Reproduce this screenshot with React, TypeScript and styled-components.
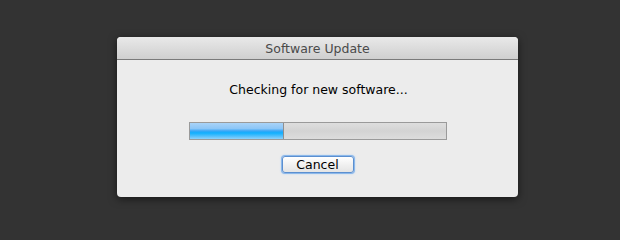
import React, { FC } from 'react'
import styled, { createGlobalStyle } from 'styled-components'

const GlobalStyle = createGlobalStyle`
  html, body {
    margin: 0;
    padding: 0;
    background: #333333;
  }
  body {
    font-family: 'DejaVu Sans', 'Liberation Sans', sans-serif;
  }
`

type TProps = {
  progress: number
}

const UpdateDialog: FC<TProps> = (props: TProps) => {
  return (
    <Dialog>
      <TitleBar>Software Update</TitleBar>
      <Body>
        <Message>Checking for new software...</Message>
        <Track>
          <Fill style={{ width: `${props.progress}%` }} />
        </Track>
        <Button>Cancel</Button>
      </Body>
    </Dialog>
  )
}

export default function App() {
  return (
    <>
      <GlobalStyle />
      <Page>
        <UpdateDialog progress={36.5} />
      </Page>
    </>
  )
}

const Page = styled.div`
  width: 620px;
  height: 240px;
  display: flex;
  align-items: flex-start;
  padding: 37px 0 0 117px;
  box-sizing: border-box;
`

const Dialog = styled.div`
  width: 401px;
  height: 160px;
  display: flex;
  flex-direction: column;
  background: #ececec;
  border-radius: 4px;
  overflow: hidden;
  box-shadow: 0 2px 8px rgba(0, 0, 0, 0.55);
`

const TitleBar = styled.div`
  height: 21px;
  flex-shrink: 0;
  display: flex;
  align-items: center;
  justify-content: center;
  background: linear-gradient(#e9e9e9, #cfcfcf);
  border-bottom: 1px solid #7a7a7a;
  color: #4a4a4a;
  font-size: 12.5px;
  padding-top: 1px;
  box-sizing: content-box;
`

const Body = styled.div`
  display: flex;
  flex-direction: column;
  align-items: center;
  padding-top: 22px;
`

const Message = styled.div`
  color: #000;
  font-size: 12.5px;
  line-height: 16px;
  padding-left: 2px;
`

const Track = styled.div`
  width: 256px;
  height: 16px;
  margin-top: 24px;
  border: 1px solid #9a9a9a;
  background: linear-gradient(#dedede, #d3d3d3 50%, #dcdcdc);
  display: flex;
`

const Fill = styled.div`
  height: 100%;
  border-right: 1px solid #8f8f8f;
  background: linear-gradient(
    #a9d3f8 0%,
    #8cc6f7 35%,
    #3aa6f6 50%,
    #10b0ff 62%,
    #5cc2fc 85%,
    #8fd2fb 100%
  );
`

const Button = styled.button`
  margin-top: 16px;
  width: 72px;
  height: 17px;
  padding: 0;
  border: 1px solid #5b8fd0;
  border-radius: 3px;
  box-shadow: 0 0 0 1px #8cb8ea, 0 0 2px 1px #b7d4f4;
  background: linear-gradient(#ffffff, #f1f1f1 50%, #e4e4e4);
  color: #000;
  font-family: 'DejaVu Sans', 'Liberation Sans', sans-serif;
  font-size: 12.5px;
  line-height: 15px;
`
